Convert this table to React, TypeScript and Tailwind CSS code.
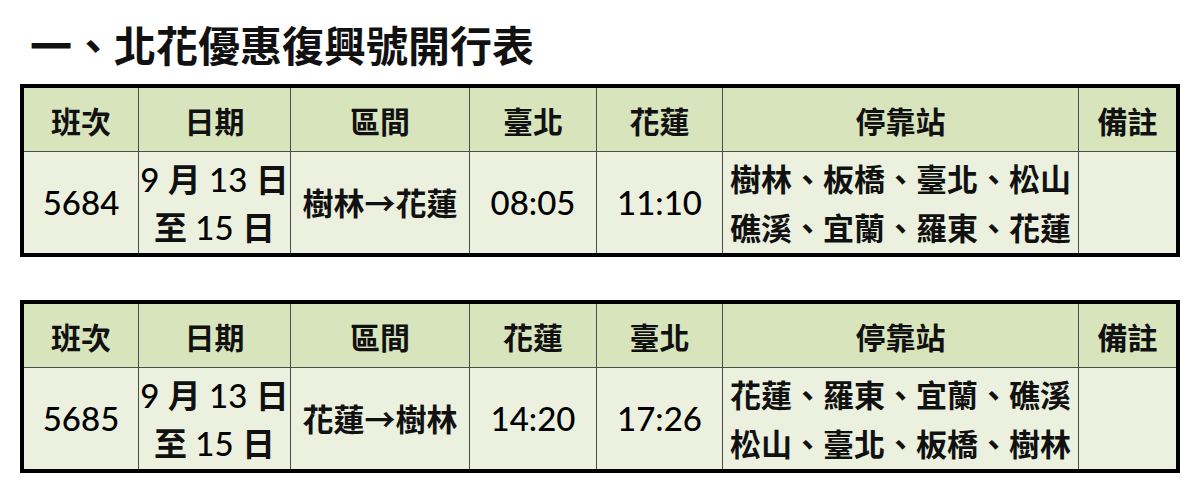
import React from "react";

const CJK = /[\u2190-\u21ff\u3000-\u9fff\uff00-\uffef]+|[^\u2190-\u21ff\u3000-\u9fff\uff00-\uffef]+/g;

// Chinese runs are bold (JhengHei look), latin digits stay regular (Calibri look)
function Mixed({ text }: { text: string }) {
  const parts = text.match(CJK) ?? [];
  return (
    <>
      {parts.map((p, i) =>
        /[\u2190-\u21ff\u3000-\u9fff\uff00-\uffef]/.test(p) ? (
          <span key={i} className="font-['Noto_Sans_CJK_TC',sans-serif] font-bold">
            {p}
          </span>
        ) : (
          <span key={i} className="font-['Lato','Noto_Sans_CJK_TC',sans-serif] font-medium text-black">
            {p}
          </span>
        )
      )}
    </>
  );
}

type Row = {
  no: string;
  date: [string, string];
  route: string;
  from: string;
  to: string;
  fromTime: string;
  toTime: string;
  stops: [string, string];
};

const rows: Row[] = [
  {
    no: "5684",
    date: ["9 月 13 日", "至 15 日"],
    route: "樹林→花蓮",
    from: "臺北",
    to: "花蓮",
    fromTime: "08:05",
    toTime: "11:10",
    stops: ["樹林、板橋、臺北、松山", "礁溪、宜蘭、羅東、花蓮"],
  },
  {
    no: "5685",
    date: ["9 月 13 日", "至 15 日"],
    route: "花蓮→樹林",
    from: "花蓮",
    to: "臺北",
    fromTime: "14:20",
    toTime: "17:26",
    stops: ["花蓮、羅東、宜蘭、礁溪", "松山、臺北、板橋、樹林"],
  },
];

function Head({ children }: { children: string }) {
  return (
    <div className="flex items-center justify-center bg-[#d8e4bc] text-[30px] leading-none text-[#111]">
      <Mixed text={children} />
    </div>
  );
}

function Cell({ lines, size = "text-[33px]" }: { lines: string[]; size?: string }) {
  return (
    <div
      className={`flex flex-col items-center justify-center bg-[#ebf1de] ${size} leading-[47px] whitespace-nowrap text-[#111]`}
    >
      {lines.map((l) => (
        <div key={l}>
          <Mixed text={l} />
        </div>
      ))}
    </div>
  );
}

function Timetable({ row }: { row: Row }) {
  return (
    <div className="w-[1160px] border-4 border-black">
      <div className="grid grid-cols-[114px_151px_178px_126px_125px_355px_97px] grid-rows-[63px_101px] gap-px bg-[#4d4d4d]">
        <Head>班次</Head>
        <Head>日期</Head>
        <Head>區間</Head>
        <Head>{row.from}</Head>
        <Head>{row.to}</Head>
        <Head>停靠站</Head>
        <Head>備註</Head>

        <Cell lines={[row.no]} />
        <Cell lines={row.date} />
        <Cell lines={[row.route]} size="text-[31px]" />
        <Cell lines={[row.fromTime]} />
        <Cell lines={[row.toTime]} />
        <Cell lines={row.stops} size="text-[31px]" />
        <Cell lines={[]} />
      </div>
    </div>
  );
}

export default function App() {
  return (
    <div className="h-[498px] w-[1200px] overflow-hidden bg-white px-5">
      <h1 className="mt-[23px] pl-[10px] font-['Noto_Sans_CJK_TC',sans-serif] text-[42px] font-bold leading-[42px] text-[#111]">
        一、北花優惠復興號開行表
      </h1>
      <div className="mt-[19px] flex flex-col gap-[43px]">
        {rows.map((r) => (
          <Timetable key={r.no} row={r} />
        ))}
      </div>
    </div>
  );
}
